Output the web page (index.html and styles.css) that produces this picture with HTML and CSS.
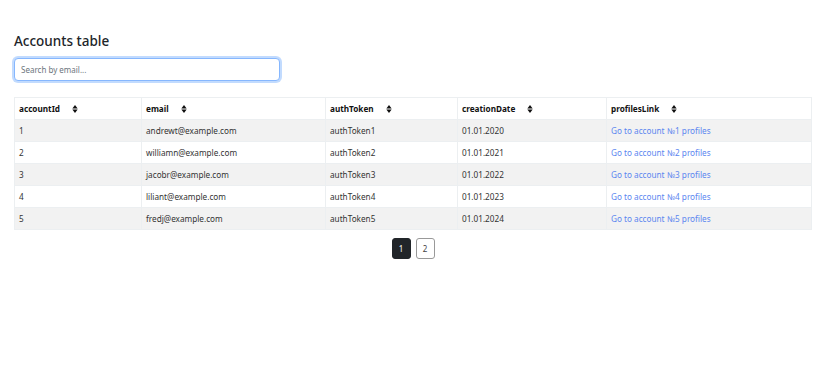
FILE: index.html
```html
<html>
    <head>
        <title>Accounts table</title>
        <link rel="stylesheet" href="styles.css">
    </head>
    <body>
        <div class="page">
            <h4 class="pageTitle">Accounts table</h4>
            <input class="searchBox" type="text" placeholder="Search by email...">
            <table class="accountsTable">
                <thead>
                    <tr>
                        <th class="colId">accountId <svg class="sortIcon" viewBox="0 0 6 9"><path d="M0 4L3 0L6 4Z M0 5L3 9L6 5Z"/></svg></th>
                        <th class="colEmail">email <svg class="sortIcon" viewBox="0 0 6 9"><path d="M0 4L3 0L6 4Z M0 5L3 9L6 5Z"/></svg></th>
                        <th class="colToken">authToken <svg class="sortIcon" viewBox="0 0 6 9"><path d="M0 4L3 0L6 4Z M0 5L3 9L6 5Z"/></svg></th>
                        <th class="colDate">creationDate <svg class="sortIcon" viewBox="0 0 6 9"><path d="M0 4L3 0L6 4Z M0 5L3 9L6 5Z"/></svg></th>
                        <th>profilesLink <svg class="sortIcon" viewBox="0 0 6 9"><path d="M0 4L3 0L6 4Z M0 5L3 9L6 5Z"/></svg></th>
                    </tr>
                </thead>
                <tbody>
                    <tr class="stripe">
                        <td>1</td>
                        <td>andrewt@example.com</td>
                        <td>authToken1</td>
                        <td>01.01.2020</td>
                        <td><a href="#">Go to account №1 profiles</a></td>
                    </tr>
                    <tr>
                        <td>2</td>
                        <td>williamn@example.com</td>
                        <td>authToken2</td>
                        <td>01.01.2021</td>
                        <td><a href="#">Go to account №2 profiles</a></td>
                    </tr>
                    <tr class="stripe">
                        <td>3</td>
                        <td>jacobr@example.com</td>
                        <td>authToken3</td>
                        <td>01.01.2022</td>
                        <td><a href="#">Go to account №3 profiles</a></td>
                    </tr>
                    <tr>
                        <td>4</td>
                        <td>liliant@example.com</td>
                        <td>authToken4</td>
                        <td>01.01.2023</td>
                        <td><a href="#">Go to account №4 profiles</a></td>
                    </tr>
                    <tr class="stripe">
                        <td>5</td>
                        <td>fredj@example.com</td>
                        <td>authToken5</td>
                        <td>01.01.2024</td>
                        <td><a href="#">Go to account №5 profiles</a></td>
                    </tr>
                </tbody>
            </table>
            <div class="pager">
                <button type="button" class="pageBtn active">1</button>
                <button type="button" class="pageBtn">2</button>
            </div>
        </div>
    </body>
</html>
```
FILE: styles.css
```css
body {
    margin: 0;
    font-family: "Noto Sans", "Open Sans", sans-serif;
    color: #212529;
    background: #ffffff;
}
.page {
    padding: 31px 16px 0 14px;
}
.pageTitle {
    margin: 0 0 7px 0;
    font-size: 13.5px;
    font-weight: 500;
    line-height: 20px;
}
.searchBox {
    display: block;
    box-sizing: border-box;
    width: 266px;
    height: 23px;
    margin: 0 0 16px 0;
    padding: 0 6px;
    font-family: inherit;
    font-size: 8px;
    color: #212529;
    border: 1px solid #86b7fe;
    border-radius: 4px;
    box-shadow: 0 0 0 2px rgba(13, 110, 253, 0.25);
    outline: none;
}
.searchBox::placeholder {
    color: #6c757d;
}
.accountsTable {
    width: 798px;
    border-collapse: collapse;
    font-size: 8.2px;
}
.accountsTable th,
.accountsTable td {
    height: 22px;
    box-sizing: border-box;
    padding: 0 4px;
    text-align: left;
    border: 1px solid #eceff1;
    white-space: nowrap;
}
.accountsTable th {
    font-weight: 700;
    color: #111;
}
.accountsTable td {
    color: #333;
}
.colId { width: 127px; }
.colEmail { width: 184px; }
.colToken { width: 132px; }
.colDate { width: 149px; }
.sortIcon {
    width: 6px;
    height: 8px;
    margin-left: 10px;
    vertical-align: -1px;
    fill: #111;
}
.stripe td {
    background: #f2f2f2;
}
.accountsTable a {
    color: #5b86f0;
    text-decoration: none;
}
.pager {
    display: flex;
    justify-content: center;
    gap: 5px;
    margin-top: 8px;
}
.pageBtn {
    width: 19px;
    height: 21px;
    padding: 0;
    font-family: inherit;
    font-size: 8px;
    color: #444;
    background: #fff;
    border: 1px solid #999;
    border-radius: 3px;
}
.pageBtn.active {
    color: #fff;
    background: #212529;
    border-color: #212529;
}
```
